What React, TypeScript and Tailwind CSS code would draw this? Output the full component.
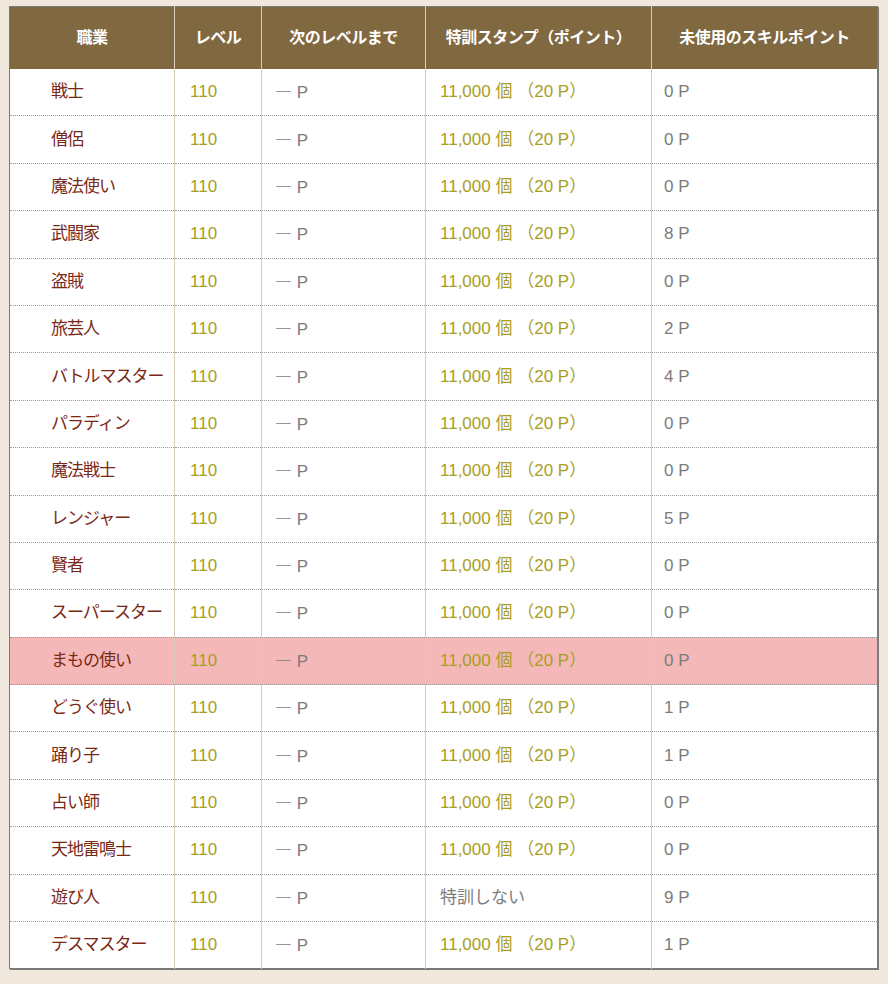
import React from "react";

type Job = {
  name: string;
  stamp?: boolean;
  unused: string;
  active?: boolean;
};

const jobs: Job[] = [
  { name: "戦士", stamp: true, unused: "0" },
  { name: "僧侶", stamp: true, unused: "0" },
  { name: "魔法使い", stamp: true, unused: "0" },
  { name: "武闘家", stamp: true, unused: "8" },
  { name: "盗賊", stamp: true, unused: "0" },
  { name: "旅芸人", stamp: true, unused: "2" },
  { name: "バトルマスター", stamp: true, unused: "4" },
  { name: "パラディン", stamp: true, unused: "0" },
  { name: "魔法戦士", stamp: true, unused: "0" },
  { name: "レンジャー", stamp: true, unused: "5" },
  { name: "賢者", stamp: true, unused: "0" },
  { name: "スーパースター", stamp: true, unused: "0" },
  { name: "まもの使い", stamp: true, unused: "0", active: true },
  { name: "どうぐ使い", stamp: true, unused: "1" },
  { name: "踊り子", stamp: true, unused: "1" },
  { name: "占い師", stamp: true, unused: "0" },
  { name: "天地雷鳴士", stamp: true, unused: "0" },
  { name: "遊び人", stamp: false, unused: "9" },
  { name: "デスマスター", stamp: true, unused: "1" },
];

const headers = ["職業", "レベル", "次のレベルまで", "特訓スタンプ（ポイント）", "未使用のスキルポイント"];
const widths = ["w-[165px]", "w-[87px]", "w-[164px]", "w-[226px]", "w-[226px]"];

export default function App() {
  return (
    <div className="min-h-[984px] bg-[#f0e8dc] pl-[9px] pt-[6px] font-['Liberation_Sans','Noto_Sans_CJK_JP',sans-serif]">
      <table className="w-[869px] table-fixed border-collapse border border-[#7a7a7a] bg-white shadow-[1px_1px_0_#7a7a7a]">
        <colgroup>
          {widths.map((w, i) => (
            <col key={i} className={w} />
          ))}
        </colgroup>
        <thead>
          <tr className="h-[62px] bg-[#806841]">
            {headers.map((h, i) => (
              <th
                key={h}
                className={`px-1 text-center text-[16px] font-bold tracking-[-0.5px] text-white ${
                  i > 0 ? "border-l border-[#d8ccb4]" : ""
                }`}
              >
                {h}
              </th>
            ))}
          </tr>
        </thead>
        <tbody>
          {jobs.map((job, idx) => (
            <tr
              key={job.name}
              className={`h-[47.4px] text-[17px] leading-[24px] ${job.active ? "bg-[#f4b8b8]" : ""} ${
                idx < jobs.length - 1 ? "border-b border-dotted border-[#9a9a9a]" : ""
              }`}
            >
              <td className="pl-[41px] tracking-[-1px] text-[#7a2816]">{job.name}</td>
              <td className="border-l border-[#d6ccb8] pl-[15px] text-[#a99e1c]">110</td>
              <td className="border-l border-[#d6ccb8] pl-[13px] text-[#7c7c7c]">
                <span className="font-['Noto_Sans_CJK_JP',sans-serif]">―</span> P
              </td>
              <td className="border-l border-[#d6ccb8] pl-[14px]">
                {job.stamp ? (
                  <span className="text-[#a99e1c]">11,000 個 （20 P）</span>
                ) : (
                  <span className="text-[#7c7c7c]">特訓しない</span>
                )}
              </td>
              <td className="border-l border-[#d6ccb8] pl-[12px] text-[#7c7c7c]">{job.unused} P</td>
            </tr>
          ))}
        </tbody>
      </table>
    </div>
  );
}
